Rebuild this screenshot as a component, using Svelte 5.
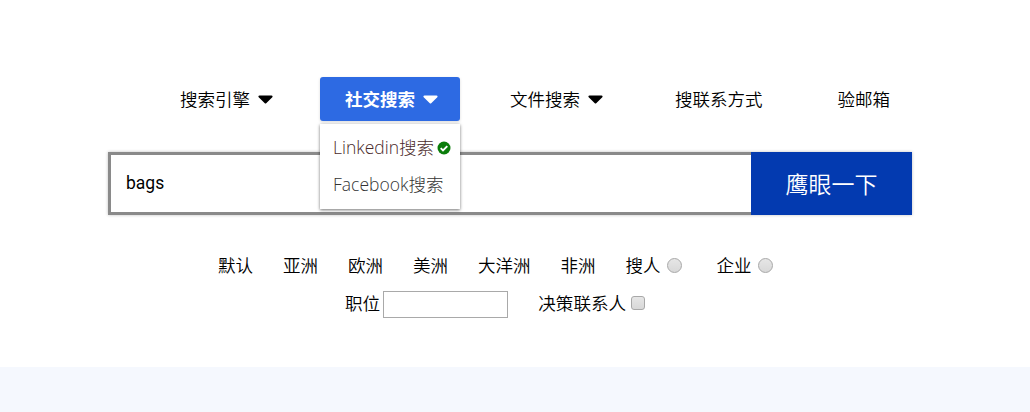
<script>
  const regions = ['默认', '亚洲', '欧洲', '美洲', '大洋洲', '非洲'];
  const caretPath = 'M1.5 0.5h12c1 0 1.4 1 .8 1.7L8.2 8.2c-.4.4-1 .4-1.4 0L.7 2.200C.1 1.500.5.500 1.500.500z';
</script>

<div class="page">
  <nav class="tabs">
    <div class="tab has-caret">
      <span>搜索引擎</span>
      <svg class="caret" viewBox="0 0 15 9"><path d={caretPath} /></svg>
    </div>
    <div class="tab has-caret active">
      <span>社交搜索</span>
      <svg class="caret" viewBox="0 0 15 9"><path d={caretPath} /></svg>
      <div class="menu">
        <div class="menu-item first">
          <span>Linkedin搜索</span>
          <svg class="check" viewBox="0 0 14 14"><circle cx="7" cy="7" r="6.5" fill="#0a7d0a" /><path d="M3.700 7.200l2.300 2.300 4.300-4.400" fill="none" stroke="#fff" stroke-width="1.900" /></svg>
        </div>
        <div class="menu-item"><span>Facebook搜索</span></div>
      </div>
    </div>
    <div class="tab has-caret">
      <span>文件搜索</span>
      <svg class="caret" viewBox="0 0 15 9"><path d={caretPath} /></svg>
    </div>
    <div class="tab"><span>搜联系方式</span></div>
    <div class="tab"><span>验邮箱</span></div>
  </nav>

  <div class="search">
    <input class="query" type="text" value="bags" />
    <button class="go">鹰眼一下</button>
  </div>

  <div class="filters">
    {#each regions as r}
      <span class="region">{r}</span>
    {/each}
    <label class="opt people"><span>搜人</span><input class="radio" type="radio" name="t" /></label>
    <label class="opt"><span>企业</span><input class="radio" type="radio" name="t" /></label>
  </div>

  <div class="filters second">
    <label class="job"><span>职位</span><input class="job-input" type="text" /></label>
    <label class="opt"><span>决策联系人</span><input class="box" type="checkbox" /></label>
  </div>

  <div class="band"></div>
</div>

<style>
  :global(body) {
    margin: 0;
    background: #fff;
  }
  .page {
    width: 1030px;
    height: 412px;
    overflow: hidden;
    position: relative;
    font-family: "Noto Sans CJK SC", sans-serif;
    font-size: 17.5px;
    font-weight: 350;
    color: #000;
    display: flex;
    flex-direction: column;
  }
  .tabs {
    display: flex;
    gap: 25px;
    margin: 77px 0 0 155px;
    height: 44px;
    align-items: stretch;
  }
  .tab {
    position: relative;
    display: flex;
    align-items: center;
    padding: 0 25px;
    line-height: 44px;
    white-space: nowrap;
  }
  .has-caret {
    padding-right: 22px;
  }
  .caret {
    width: 15px;
    height: 9px;
    margin-left: 8px;
    fill: #000;
  }
  .active {
    background: #2d6ae3;
    color: #fff;
    font-weight: 700;
    border-radius: 3px;
    box-shadow: 0 1px 3px rgba(0, 0, 0, 0.15);
  }
  .active .caret {
    fill: #fff;
  }
  .menu {
    position: absolute;
    top: 47px;
    left: 0;
    width: 140px;
    height: 85px;
    background: #fff;
    box-shadow: 0 1px 3px rgba(0, 0, 0, 0.55);
    z-index: 2;
    font-weight: 300;
    color: #333;
    padding-top: 5px;
    box-sizing: border-box;
  }
  .menu-item {
    display: flex;
    align-items: center;
    height: 37px;
    line-height: 37px;
    padding-left: 13px;
    font-family: "Open Sans", "Noto Sans CJK SC", sans-serif;
    font-size: 17.5px;
  }
  .first {
    color: #4a2a2a;
  }
  .check {
    width: 14px;
    height: 14px;
    margin-left: 3px;
  }
  .search {
    display: flex;
    width: 804px;
    height: 63px;
    margin: 31px 0 0 108px;
    box-shadow: 0 0 3px rgba(0, 0, 0, 0.25);
  }
  .query {
    flex: 1;
    min-width: 0;
    box-sizing: border-box;
    height: 63px;
    border: 3px solid #8a8a8a;
    border-right: none;
    outline: none;
    padding: 0 0 2px 15px;
    font-family: Roboto, sans-serif;
    font-size: 17.5px;
    color: #000;
    background: #fff;
  }
  .go {
    width: 161px;
    border: none;
    background: #033ab0;
    color: #fff;
    font-family: "Noto Sans CJK SC", sans-serif;
    font-size: 23px;
    font-weight: 350;
    padding: 0 0 2px;
  }
  .filters {
    display: flex;
    align-items: center;
    height: 26px;
    margin: 37px 0 0 218px;
    line-height: 26px;
  }
  .second {
    height: 27px;
    margin: 13px 0 0 345px;
    align-items: flex-start;
    line-height: 24px;
    font-size: 17.6px;
  }
  .region {
    margin-right: 30px;
  }
  .opt {
    display: flex;
    align-items: center;
  }
  .people {
    margin-right: 35px;
  }
  .radio,
  .box {
    appearance: none;
    width: 15px;
    height: 15px;
    margin: 0 0 0 6px;
    box-sizing: border-box;
    border: 1px solid #a8a8a8;
    background: linear-gradient(#e6e6e6, #d8d8d8);
  }
  .radio {
    border-radius: 50%;
  }
  .box {
    width: 14px;
    height: 14px;
    margin-left: 5px;
    border-radius: 3px;
  }
  .job {
    display: flex;
    align-items: flex-start;
    margin-right: 30px;
  }
  .job-input {
    width: 125px;
    height: 27px;
    box-sizing: border-box;
    margin: 0 0 0 3px;
    border: 1px solid #a9a9a9;
    background: #fff;
    padding: 0;
    outline: none;
  }
  .band {
    position: absolute;
    left: 0;
    right: 0;
    bottom: 0;
    height: 45px;
    background: #f5f8fe;
  }
</style>
